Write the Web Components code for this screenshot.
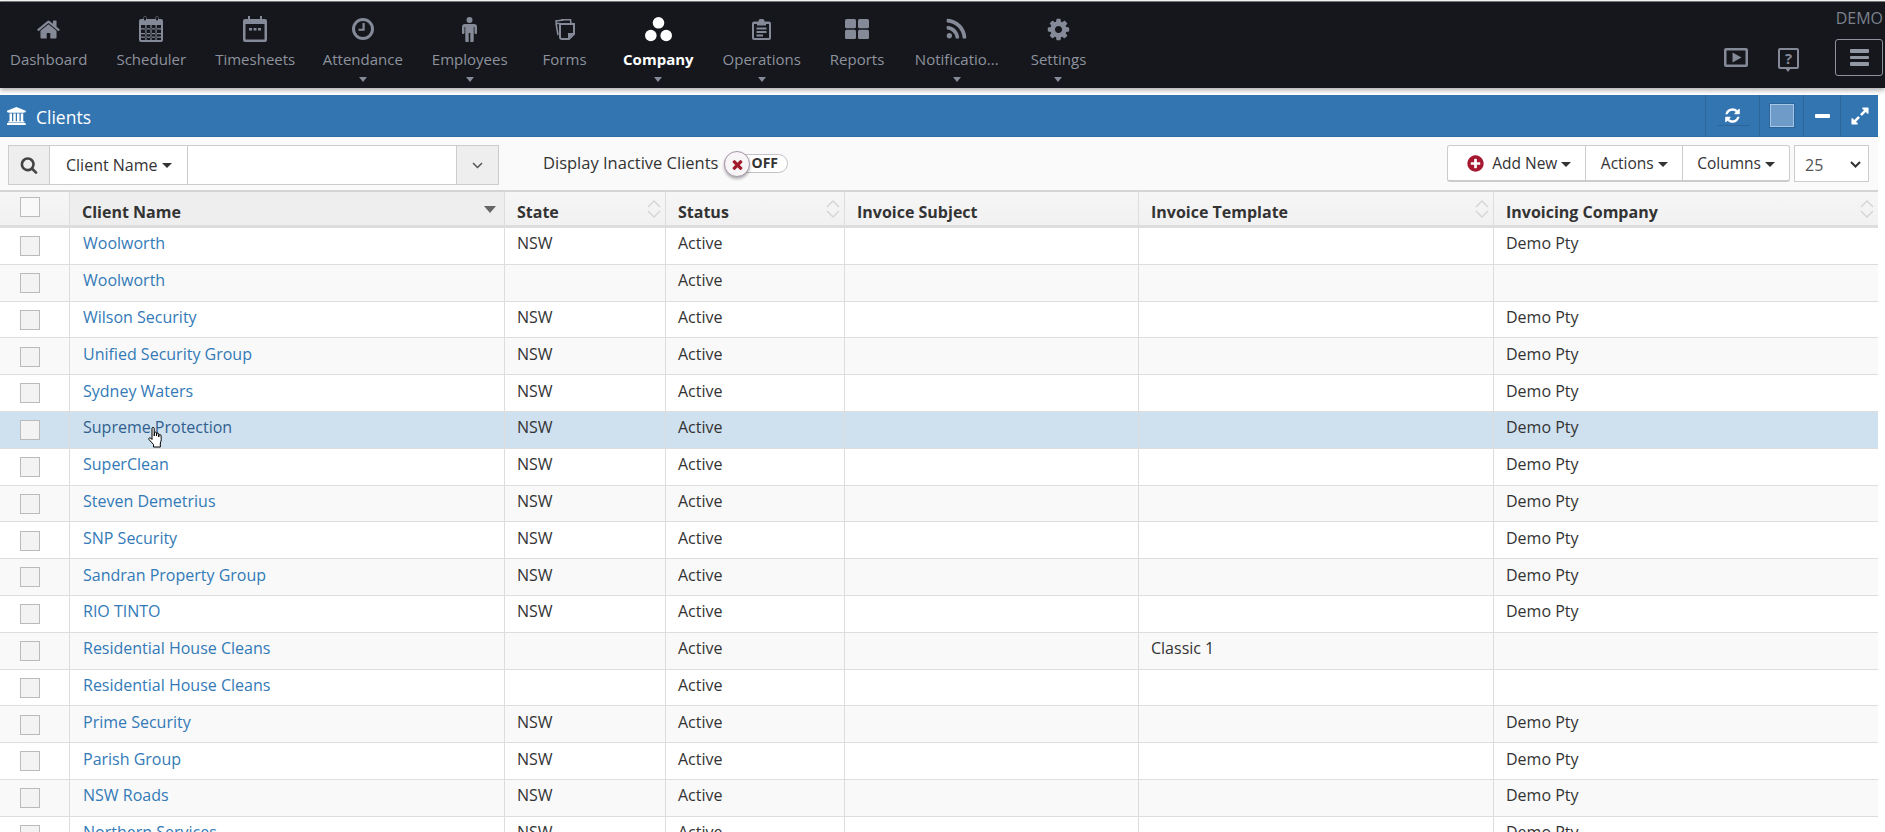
<!DOCTYPE html>
<html>
<head>
<meta charset="utf-8">
<title>Clients</title>
<style>
  html, body { margin: 0; height: 100%; overflow: hidden; background: #fff; }
  body { font-family: "Open Sans", sans-serif; font-size: 14px; color: #333; }
</style>
</head>
<body>
<app-nav></app-nav>
<app-panel>
  <panel-toolbar></panel-toolbar>
  <client-table></client-table>
</app-panel>

<script>
const FA = {
  home: [1792, '<path d="M1472 992v480q0 26-19 45t-45 19h-384v-384h-256v384h-384q-26 0-45-19t-19-45v-480q0-1 .5-3t.5-3l575-474 575 474q1 2 1 6zm223-69l-62 74q-8 9-21 11h-3q-13 0-21-7l-692-577-692 577q-12 8-24 7-13-2-21-11l-62-74q-8-10-7-23.5t11-21.5l719-599q32-26 76-26t76 26l244 204v-195q0-14 9-23t23-9h192q14 0 23 9t9 23v408l219 182q10 8 11 21.5t-7 23.5z"/>'],
  cog: [1792, '<path d="M1152 896q0-106-75-181t-181-75-181 75-75 181 75 181 181 75 181-75 75-181zm512-109v222q0 12-8 23t-20 13l-185 28q-19 54-39 91 35 50 107 138 10 12 10 25t-9 23q-27 37-99 108t-94 71q-12 0-26-9l-138-108q-44 23-91 38-16 136-29 186-7 28-36 28h-222q-14 0-24.5-8.5t-11.5-21.5l-28-184q-49-16-90-37l-141 107q-10 9-25 9-14 0-25-11-126-114-165-168-7-10-7-23 0-12 8-23 15-21 51-66.5t54-70.5q-27-50-41-99l-183-27q-13-2-21-12.5t-8-23.5v-222q0-12 8-23t19-13l186-28q14-46 39-92-40-57-107-138-10-12-10-24 0-10 9-23 26-36 98.5-107.5t94.5-71.5q13 0 26 10l138 107q44-23 91-38 16-136 29-186 7-28 36-28h222q14 0 24.5 8.5t11.5 21.5l28 184q49 16 90 37l142-107q9-9 24-9 13 0 25 10 129 119 165 170 7 8 7 22 0 12-8 23-15 21-51 66.5t-54 70.5q26 50 41 98l183 28q13 2 21 12.5t8 23.5z"/>'],
  rss: [1792, '<path d="M576 1344q0 80-56 136t-136 56-136-56-56-136 56-136 136-56 136 56 56 136zm512 123q2 28-17 48-18 21-47 21h-135q-25 0-43-16.5t-20-41.5q-22-229-184.5-391.5t-391.5-184.5q-25-2-41.5-20t-16.5-43v-135q0-29 21-47 17-17 43-17h5q160 13 306 80.5t259 181.5q114 113 181.5 259t80.5 306zm512 2q2 27-18 47-18 20-46 20h-143q-26 0-44.5-17.5t-19.5-42.5q-12-215-101-408.5t-231.5-336-336-231.5-408.5-102q-25-1-42.5-19.5t-17.5-43.5v-143q0-28 20-46 18-18 44-18h3q262 13 501.5 120t425.5 294q187 186 294 425.5t120 501.5z"/>'],
  refresh: [1792, '<path d="M1639 1056q0 5-1 7-64 268-268 434.5t-478 166.5q-146 0-282.5-55t-243.5-157l-129 129q-19 19-45 19t-45-19-19-45v-448q0-26 19-45t45-19h448q26 0 45 19t19 45-19 45l-137 137q71 66 161 102t187 36q134 0 250-65t186-179q11-17 53-117 8-23 30-23h192q13 0 22.5 9.5t9.5 22.5zm25-800v448q0 26-19 45t-45 19h-448q-26 0-45-19t-19-45 19-45l138-138q-148-137-349-137-134 0-250 65t-186 179q-11 17-53 117-8 23-30 23h-199q-13 0-22.5-9.5t-9.5-22.5v-7q65-268 270-434.5t480-166.5q146 0 284 55.5t245 156.5l130-129q19-19 45-19t45 19 19 45z"/>'],
  expand: [1792, '<path d="M883 1056q0 13-10 23l-332 332 144 144q19 19 19 45t-19 45-45 19h-448q-26 0-45-19t-19-45v-448q0-26 19-45t45-19 45 19l144 144 332-332q10-10 23-10t23 10l114 114q10 10 10 23zm781-864v448q0 26-19 45t-45 19-45-19l-144-144-332 332q-10 10-23 10t-23-10l-114-114q-10-10-10-23t10-23l332-332-144-144q-19-19-19-45t19-45 45-19h448q26 0 45 19t19 45z"/>'],
  search: [1792, '<path d="M1216 832q0-185-131.5-316.5t-316.5-131.5-316.5 131.5-131.5 316.5 131.5 316.5 316.5 131.5 316.5-131.5 131.5-316.5zm512 832q0 52-38 90t-90 38q-54 0-90-38l-343-342q-179 124-399 124-143 0-273.5-55.5t-225-150-150-225-55.5-273.5 55.5-273.5 150-225 225-150 273.5-55.5 273.5 55.5 225 150 150 225 55.5 273.5q0 220-124 399l343 343q37 37 37 90z"/>'],
  times: [1792, '<path d="M1490 1322q0 40-28 68l-136 136q-28 28-68 28t-68-28l-294-294-294 294q-28 28-68 28t-68-28l-136-136q-28-28-28-68t28-68l294-294-294-294q-28-28-28-68t28-68l136-136q28-28 68-28t68 28l294 294 294-294q28-28 68-28t68 28l136 136q28 28 28 68t-28 68l-294 294 294 294q28 28 28 68z"/>'],
  plus: [1792, '<path d="M1344 960v-128q0-26-19-45t-45-19h-256v-256q0-26-19-45t-45-19h-128q-26 0-45 19t-19 45v256h-256q-26 0-45 19t-19 45v128q0 26 19 45t45 19h256v256q0 26 19 45t45 19h128q26 0 45-19t19-45v-256h256q26 0 45-19t19-45zm320-64q0 209-103 385.5t-279.5 279.5-385.5 103-385.5-103-279.5-279.5-103-385.5 103-385.5 279.5-279.5 385.5-103 385.5 103 279.5 279.5 103 385.5z"/>'],
  bank: [2048, '<path d="M960 0l960 384v128h-128q0 26-20.5 45t-48.5 19h-1526q-28 0-48.5-19t-20.5-45h-128v-128zm-704 640h256v768h128v-768h256v768h128v-768h256v768h128v-768h256v768h59q28 0 48.5 19t20.5 45v64h-1664v-64q0-26 20.5-45t48.5-19h59v-768zm1595 960q28 0 48.5 19t20.5 45v128h-1920v-128q0-26 20.5-45t48.5-19h1782z"/>'],
  calendar: [24, '<path fill-rule="evenodd" d="M2 3h2.500V1.500a1.500 1.500 0 0 1 3 0V3h9V1.500a1.500 1.500 0 0 1 3 0V3H22a2 2 0 0 1 2 2v19a2 2 0 0 1-2 2H2a2 2 0 0 1-2-2V5a2 2 0 0 1 2-2zM2 9v15h20V9zM5 3.500a1 1 0 0 0 2 0V1.500a1 1 0 0 0-2 0zM17 3.500a1 1 0 0 0 2 0V1.500a1 1 0 0 0-2 0z"/><path d="M6.300 9v15h1.200V9zM11.400 9v15h1.200V9zM16.500 9v15h1.200V9zM2 12.300h20v1.200H2zM2 17h20v1.200H2zM2 20.600h20v1.200H2z"/>', '0 -0 24 26'],
  timesheet: [24, '<path fill-rule="evenodd" d="M5 0h2v3h10V0h2v3h3a2 2 0 0 1 2 2v19a2 2 0 0 1-2 2H2a2 2 0 0 1-2-2V5a2 2 0 0 1 2-2h3zM2.500 8v15.500h19V8z"/><rect x="6" y="12" width="3" height="2.500"/><rect x="10.500" y="12" width="3" height="2.500"/><rect x="15" y="12" width="3" height="2.500"/>', '0 0 24 26'],
  clock: [22, '<path fill-rule="evenodd" d="M11 0a11 11 0 1 1 0 22a11 11 0 0 1 0-22zm0 3a8 8 0 1 0 0 16a8 8 0 0 0 0-16z"/><path d="M10.500 5h2.200v7.800H6.500v-2h4z"/>', '0 0 22 22'],
  male: [15, '<circle cx="7.500" cy="3" r="3"/><path d="M3 7h9a3 3 0 0 1 3 3v6a1 1 0 0 1-1 1h-.500a1 1 0 0 1-1-1V10h-.800v14a1 1 0 0 1-1 1H8.300V16H6.700v9H4.300a1 1 0 0 1-1-1V10h-.800v6a1 1 0 0 1-1 1H1a1 1 0 0 1-1-1v-6a3 3 0 0 1 3-3z"/>', '0 0 15 25'],
  forms: [20, '<path fill="none" stroke="currentColor" stroke-width="1.600" d="M6 .8l9.500-.0.500 3.500M5.500 4.500H1.500L1 2l9-1.200M3 16l-2-12"/><path fill="none" stroke="currentColor" stroke-width="2" d="M5 5h14v10l-5 5H7a2 2 0 0 1-2-2z"/><path d="M13 14h6l-6 6z"/>', '0 0 20 21'],
  clip: [19, '<path fill-rule="evenodd" d="M6.500 2.500V2a2 2 0 0 1 2-2h2a2 2 0 0 1 2 2v.500H17a2 2 0 0 1 2 2V19a2 2 0 0 1-2 2H2a2 2 0 0 1-2-2V4.500a2 2 0 0 1 2-2zM2 5v14h15V5h-3v1.500H5V5z"/><rect x="4.500" y="8.500" width="10" height="2"/><rect x="4.500" y="12" width="10" height="2"/><rect x="4.500" y="15.500" width="6.500" height="2"/>', '0 0 19 21'],
  grid: [24, '<rect width="11" height="9.300" rx="1.500"/><rect x="13" width="11" height="9.300" rx="1.500"/><rect y="10.700" width="11" height="9.300" rx="1.500"/><rect x="13" y="10.700" width="11" height="9.300" rx="1.500"/>', '0 0 24 20'],
  dots: [27, '<circle cx="13.500" cy="5.800" r="5.800"/><circle cx="5.800" cy="18.500" r="5.800"/><circle cx="21.200" cy="18.500" r="5.800"/>', '0 0 27 25'],
  play: [24, '<path fill-rule="evenodd" d="M2 0h20a2 2 0 0 1 2 2v15a2 2 0 0 1-2 2H2a2 2 0 0 1-2-2V2a2 2 0 0 1 2-2zM2.500 2.500v14h19v-14z"/><path d="M8.500 4.500l9 5-9 5z"/>', '0 0 24 19'],
  hand: [16, '<path fill="#fff" stroke="#000" stroke-width="1" stroke-linejoin="round" d="M4 1.500a1 1 0 0 1 2.200 0V9l.3-3a1 1 0 0 1 2 .2V9l.2-2a1 1 0 0 1 2 .2V10l.3-1.500a1 1 0 0 1 2 .2c.4 3 .4 5-.7 7.300v4H5.500v-2.500L1 12.500c-.8-1.200.7-2.300 1.700-1.400L4 12.500z"/>', '0 0 16 21']
};

class xIcon extends HTMLElement {
  connectedCallback() {
    const name = this.getAttribute("name");
    const w = this.getAttribute("w");
    const h = this.getAttribute("h");
    const d = FA[name];
    const vb = d[2] || (d[0] == 2048 ? "0 0 2048 1792" : "0 0 " + d[0] + " " + d[0]);
    this.attachShadow({ mode: "open" }).innerHTML = `
      <style>
        :host { display: inline-flex; line-height: 0; }
        svg { width: ${w}px; height: ${h}px; fill: currentColor; }
      </style>
      <svg viewBox="${vb}" preserveAspectRatio="none">${d[1]}</svg>`;
  }
}

class navItem extends HTMLElement {
  static css = `
    :host {
      display: flex;
      flex-direction: column;
      align-items: center;
      padding-inline: 14.500px;
      color: #848a97;
      position: relative;
    }
    :host([active]) { color: #fff; font-weight: 700; }
    .ico { height: 32px; margin-top: 12px; display: flex; align-items: center; justify-content: center; }
    .txt { font-size: 15px; line-height: 20px; margin-top: 4px; white-space: nowrap; color: #8d929c; }
    :host([active]) .txt { color: #fff; }
    .arrow {
      width: 0; height: 0; margin-top: 8px;
      border: 4.500px solid transparent; border-top: 5px solid #848a97; border-bottom: 0;
    }
  `;
  connectedCallback() {
    const w = this.getAttribute("w"), h = this.getAttribute("h"), label = this.getAttribute("label");
    const arrow = this.hasAttribute("menu") ? `<div class="arrow"></div>` : "";
    this.attachShadow({ mode: "open" }).innerHTML = `
      <style>${navItem.css}</style>
      <div class="ico"><x-icon name="${this.getAttribute("icon")}" w="${w}" h="${h}"></x-icon></div>
      <div class="txt">${label}</div>
      ${arrow}`;
  }
}

class appNav extends HTMLElement {
  static css = `
    :host {
      display: flex;
      justify-content: space-between;
      height: 87px;
      margin-top: 1px;
      background: #15171c;
      box-shadow: 0 2px 5px rgba(0,0,0,.35);
      border-top: 1px solid #777;
      box-sizing: border-box;
      position: relative;
    }
    .items { display: flex; margin-left: -4.500px; margin-top: -1px; }
    nav-item[icon=clock] { margin-left: -1.500px; }
    nav-item[icon=forms] { width: 56px; }
    nav-item[icon=dots] { margin-left: 1.500px; }
    nav-item[icon=rss] { padding-inline: 16px; }
    nav-item[icon=cog] { padding-left: 16px; }
    .right { display: flex; flex-direction: column; align-items: flex-end; padding-right: 2px; }
    .demo { color: #7c818c; font-size: 16px; line-height: 20px; margin-top: 6px; }
    .tools { display: flex; align-items: center; margin-top: 11px; color: #848a97; }
    .tools .help { margin-left: 30px; }
    .burger {
      margin-left: 36px; width: 46px; height: 35px; border: 1px solid #8d929c; border-radius: 3px;
      display: flex; flex-direction: column; justify-content: center; align-items: center; gap: 3px;
    }
    .burger i { display: block; width: 19px; height: 3.500px; background: #9298a3; border-radius: 1px; }
  `;
  connectedCallback() {
    const items = [
      ["Dashboard", "home", 25, 25, 0],
      ["Scheduler", "calendar", 24, 26, 0],
      ["Timesheets", "timesheet", 24, 26, 0],
      ["Attendance", "clock", 22, 22, 1],
      ["Employees", "male", 15, 25, 1],
      ["Forms", "forms", 20, 21, 0],
      ["Company", "dots", 27, 25, 1, 1],
      ["Operations", "clip", 19, 21, 1],
      ["Reports", "grid", 24, 20, 0],
      ["Notificatio...", "rss", 25, 25, 1],
      ["Settings", "cog", 25, 25, 1]
    ];
    const html = items.map(i => `<nav-item label="${i[0]}" icon="${i[1]}" w="${i[2]}" h="${i[3]}" ${i[4] ? "menu" : ""} ${i[5] ? "active" : ""}></nav-item>`).join("");
    this.attachShadow({ mode: "open" }).innerHTML = `
      <style>${appNav.css}</style>
      <div class="items">${html}</div>
      <div class="right">
        <div class="demo">DEMO</div>
        <div class="tools">
          <x-icon name="play" w="24" h="19"></x-icon>
          <span class="help"><help-mark></help-mark></span>
          <div class="burger"><i></i><i></i><i></i></div>
        </div>
      </div>`;
  }
}

class helpMark extends HTMLElement {
  connectedCallback() {
    this.attachShadow({ mode: "open" }).innerHTML = `
      <style>
        :host { display: inline-block; position: relative; width: 21px; height: 24px; margin-top: 4px; }
        .box { width: 21px; height: 21px; box-sizing: border-box; border: 2px solid #848a97; border-radius: 2px;
          text-align: center; font: 700 15px/17px "Open Sans", sans-serif; color: #848a97; }
        .tip { position: absolute; left: 7px; bottom: 0; width: 0; height: 0;
          border: 3.500px solid transparent; border-top: 4px solid #848a97; border-bottom: 0; }
      </style>
      <div class="box">?</div><div class="tip"></div>`;
  }
}

class appPanel extends HTMLElement {
  static css = `
    :host { display: block; margin-top: 7px; width: 1878px; }
    header {
      height: 42px; background: #3375b1; border-bottom: 1px solid #2e6ca5; box-sizing: border-box;
      display: flex; align-items: center; color: #fff;
    }
    .title { display: flex; align-items: center; gap: 9px; padding: 3px 0 0 7px; font-size: 17.500px; flex: 1; }
    .title x-icon { margin-top: -2px; }
    .cell {
      display: flex; align-items: center; justify-content: center; height: 100%;
      border-left: 1px solid #2c659c; box-sizing: border-box; position: relative;
    }
    .cell.refresh { width: 54px; }
    .cell.refresh::after { content: ""; position: absolute; left: 11px; width: 33px; bottom: 10px; height: 1px; background: #2c659c; }
    .cell.color { width: 44px; }
    .cell.color i { display: block; width: 24px; height: 23px; background: #6f9bc9; border: 1px solid #a6c6e6; outline: 1px solid #2c659c; box-sizing: border-box; }
    .cell.min { width: 37px; }
    .cell.min i { display: block; width: 15px; height: 4px; background: #fff; border-radius: 1px; }
    .cell.max { width: 38px; }
  `;
  connectedCallback() {
    this.attachShadow({ mode: "open" }).innerHTML = `
      <style>${appPanel.css}</style>
      <header>
        <div class="title"><x-icon name="bank" w="20" h="18"></x-icon><span>Clients</span></div>
        <div class="cell refresh"><x-icon name="refresh" w="17" h="17"></x-icon></div>
        <div class="cell color"><i></i></div>
        <div class="cell min"><i></i></div>
        <div class="cell max"><x-icon name="expand" w="20" h="20"></x-icon></div>
      </header>
      <slot></slot>`;
  }
}

class panelToolbar extends HTMLElement {
  static css = `
    :host {
      display: flex; align-items: flex-start; height: 53px; box-sizing: border-box; padding: 8px 9px 0 8px;
      background: #fafafa; font-size: 15.500px; color: #333;
    }
    .caret { display: inline-block; width: 0; height: 0; margin-left: 4px; vertical-align: middle;
      border: 5px solid transparent; border-top: 5px solid #333; border-bottom: 0; }
    .search { display: flex; height: 40px; width: 491px; box-sizing: border-box; border: 1px solid #ccc; }
    .search > div { display: flex; align-items: center; box-sizing: border-box; }
    .mag { width: 41px; justify-content: center; background: #eee; color: #444; border-right: 1px solid #ccc; }
    .field { width: 138px; padding-left: 16px; background: #fff; border-right: 1px solid #ccc; font-size: 16px; white-space: nowrap; }
    .input { flex: 1; background: #fff; }
    .drop { width: 42px; justify-content: center; background: #eee; border-left: 1px solid #ccc; }
    .chev { width: 11px; height: 7px; fill: none; stroke: #555; stroke-width: 1.500; }
    .label { margin-left: 44px; font-size: 16.500px; line-height: 18px; margin-top: 9px; white-space: nowrap; }
    .toggle { position: relative; width: 64px; height: 19px; margin: 9px 0 0 6px; box-sizing: border-box;
      border: 1px solid #c8c0c8; border-radius: 10px; background: #fff; }
    .toggle span { position: absolute; left: 26px; top: -1px; font: 700 14px/18px "Open Sans", sans-serif; color: #333; }
    .knob { position: absolute; left: -1px; top: -4px; width: 26px; height: 26px; box-sizing: border-box; border-radius: 50%;
      background: #f7f5f6; border: 1px solid #a996ad; box-shadow: 0 2px 3px rgba(0,0,0,.3);
      display: flex; align-items: center; justify-content: center; color: #a01c2c; }
    .right { margin-left: auto; display: flex; gap: 4px; }
    .group { display: flex; height: 37px; box-sizing: border-box; background: #fff; border: 1px solid #ccc; border-bottom-width: 2px; border-radius: 3px; }
    .group > div { display: flex; align-items: center; border-left: 1px solid #ccc; padding-inline: 14.500px; white-space: nowrap; }
    .group > div:last-child { padding-inline: 14px; }
    .group > div:first-child { border-left: 0; padding: 0 14px 0 18px; gap: 7px; }
    .plus { color: #a5182f; }
    .size { width: 75px; height: 37px; box-sizing: border-box; border: 1px solid #ccc; background: #fff; color: #555; font-size: 16px;
      display: flex; align-items: center; justify-content: space-between; padding: 2px 7px 0 10px; }
  `;
  connectedCallback() {
    this.attachShadow({ mode: "open" }).innerHTML = `
      <style>${panelToolbar.css}</style>
      <div class="search">
        <div class="mag"><x-icon name="search" w="18" h="18"></x-icon></div>
        <div class="field">Client Name<i class="caret"></i></div>
        <div class="input"></div>
        <div class="drop"><svg class="chev" viewBox="0 0 11 7"><path d="M1 1l4.500 4.500L10 1"/></svg></div>
      </div>
      <div class="label">Display Inactive Clients</div>
      <div class="toggle"><span>OFF</span><div class="knob"><x-icon name="times" w="15" h="15"></x-icon></div></div>
      <div class="right">
        <div class="group">
          <div><x-icon class="plus" name="plus" w="19" h="19"></x-icon><span>Add New<i class="caret"></i></span></div>
          <div><span>Actions<i class="caret"></i></span></div>
          <div><span>Columns<i class="caret"></i></span></div>
        </div>
        <div class="size"><span>25</span><svg class="chev" style="stroke:#333;stroke-width:2" viewBox="0 0 11 7"><path d="M1 1l4.500 4.500L10 1"/></svg></div>
      </div>`;
  }
}

class clientTable extends HTMLElement {
  static css = `
    :host { display: block; position: relative; }
    table { border-collapse: separate; border-spacing: 0; table-layout: fixed; width: 1878px; font-size: 16px; color: #333; }
    th, td { box-sizing: border-box; padding: 0 0 0 12px; text-align: left; border-left: 1px solid #ddd; white-space: nowrap; overflow: hidden; }
    th:first-child, td:first-child { border-left: 0; padding: 0 0 0 20px; }
    th {
      height: 38px; font-weight: 700; background: linear-gradient(#f6f6f6, #f1f1f1);
      border-top: 2px solid #d4d4d4; border-bottom: 3px solid #ddd; position: relative;
    }
    th.sorted { background: #eee; }
    th .in { display: flex; align-items: center; justify-content: space-between; padding: 7px 4px 0 0; }
    th .sort { width: 14px; height: 18px; fill: none; stroke: #d6d6d6; stroke-width: 1.500; margin-top: -6px; }
    th .down { width: 0; height: 0; margin: -5px 4px 0 0; border: 6px solid transparent; border-top: 7px solid #666; border-bottom: 0; }
    td { height: 36.800px; border-bottom: 1px solid #ddd; padding-bottom: 5px; }
    td:first-child { padding-bottom: 2px; }
    tr:nth-child(even) td { background: #f9f9f9; }
    tr.hover td { background: #cfe0ee; }
    a { color: #337ab7; text-decoration: none; padding-left: 1px; }
    tr.hover a { color: #2f5f8e; }
    .box { display: inline-block; vertical-align: middle; width: 20px; height: 20px; box-sizing: border-box; background: #f3f3f3; border: 1px solid #bbb; }
    th .box { background: #f9f9f9; margin-top: -6px; }
    .hand { position: absolute; left: 148px; top: 237px; }
  `;
  static rows = [
    ["Woolworth", "NSW", "Active", "", "", "Demo Pty"],
    ["Woolworth", "", "Active", "", "", ""],
    ["Wilson Security", "NSW", "Active", "", "", "Demo Pty"],
    ["Unified Security Group", "NSW", "Active", "", "", "Demo Pty"],
    ["Sydney Waters", "NSW", "Active", "", "", "Demo Pty"],
    ["Supreme Protection", "NSW", "Active", "", "", "Demo Pty"],
    ["SuperClean", "NSW", "Active", "", "", "Demo Pty"],
    ["Steven Demetrius", "NSW", "Active", "", "", "Demo Pty"],
    ["SNP Security", "NSW", "Active", "", "", "Demo Pty"],
    ["Sandran Property Group", "NSW", "Active", "", "", "Demo Pty"],
    ["RIO TINTO", "NSW", "Active", "", "", "Demo Pty"],
    ["Residential House Cleans", "", "Active", "", "Classic 1", ""],
    ["Residential House Cleans", "", "Active", "", "", ""],
    ["Prime Security", "NSW", "Active", "", "", "Demo Pty"],
    ["Parish Group", "NSW", "Active", "", "", "Demo Pty"],
    ["NSW Roads", "NSW", "Active", "", "", "Demo Pty"],
    ["Northern Services", "NSW", "Active", "", "", "Demo Pty"]
  ];
  connectedCallback() {
    const sort = `<svg class="sort" viewBox="0 0 14 18"><path d="M1 7l6-6 6 6M1 11l6 6 6-6"/></svg>`;
    const head = [["State", 1], ["Status", 1], ["Invoice Subject", 0], ["Invoice Template", 1], ["Invoicing Company", 1]]
      .map(h => `<th><div class="in"><span>${h[0]}</span>${h[1] ? sort : ""}</div></th>`).join("");
    const body = clientTable.rows.map((r, i) => `
      <tr class="${i == 5 ? "hover" : ""}">
        <td><i class="box"></i></td>
        <td><a href="#">${r[0]}</a></td>
        ${r.slice(1).map(c => `<td>${c}</td>`).join("")}
      </tr>`).join("");
    this.attachShadow({ mode: "open" }).innerHTML = `
      <style>${clientTable.css}</style>
      <table>
        <colgroup><col style="width:69px"><col style="width:435px"><col style="width:161px"><col style="width:179px"><col style="width:294px"><col style="width:355px"><col></colgroup>
        <thead><tr>
          <th><i class="box"></i></th>
          <th class="sorted"><div class="in"><span>Client Name</span><i class="down"></i></div></th>
          ${head}
        </tr></thead>
        <tbody>${body}</tbody>
      </table>
      <x-icon class="hand" name="hand" w="16" h="21"></x-icon>`;
  }
}

customElements.define("x-icon", xIcon);
customElements.define("nav-item", navItem);
customElements.define("help-mark", helpMark);
customElements.define("app-nav", appNav);
customElements.define("app-panel", appPanel);
customElements.define("panel-toolbar", panelToolbar);
customElements.define("client-table", clientTable);
</script>
</body>
</html>
